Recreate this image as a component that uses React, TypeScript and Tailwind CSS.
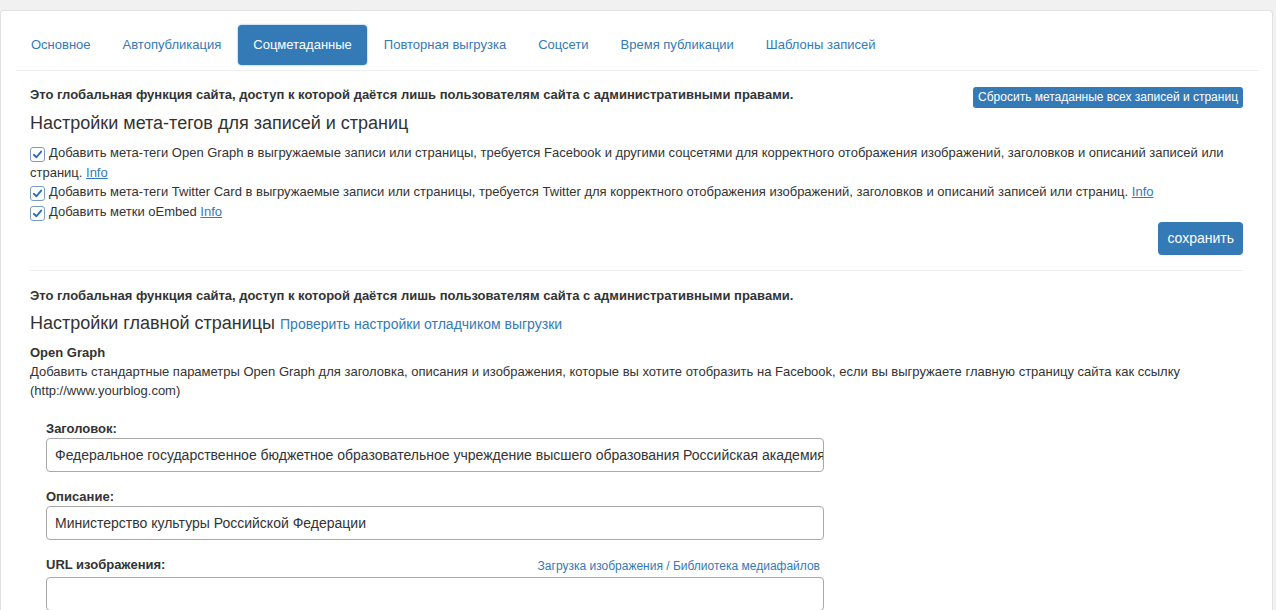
import React from 'react';

const tabs = [
  'Основное',
  'Автопубликация',
  'Соцметаданные',
  'Повторная выгрузка',
  'Соцсети',
  'Время публикации',
  'Шаблоны записей',
];

function CheckBox() {
  return (
    <span className="inline-flex h-[15px] w-[15px] shrink-0 items-center justify-center rounded-[3px] border border-[#7a9cc0] bg-white align-[-3px] mr-[4px]">
      <svg width="11" height="11" viewBox="0 0 12 12">
        <path d="M2 6.3 L4.8 9 L10 2.8" fill="none" stroke="#2a6cb3" strokeWidth="2" strokeLinecap="round" strokeLinejoin="round" />
      </svg>
    </span>
  );
}

function InfoLink() {
  return <a className="text-[#337ab7] underline cursor-pointer">Info</a>;
}

function Field({ label, value, extra }: { label: string; value?: string; extra?: string }) {
  return (
    <div className="w-[778px]">
      <div className={extra ? 'flex items-center justify-between h-[18px] mb-[3px]' : 'flex items-center justify-between h-[18px]'}>
        <label className="font-bold text-[13px] leading-[16px]">{label}</label>
        {extra && <a className="text-[12px] text-[#337ab7] pr-[4px] leading-[16px] mt-[1px]">{extra}</a>}
      </div>
      <div className="h-[34px] rounded-[4px] border border-[#a9a9a9] px-[8px] flex items-center overflow-hidden whitespace-nowrap text-[14px] text-[#333]">
        {value}
      </div>
    </div>
  );
}

export default function App() {
  return (
    <div className="min-h-[610px] bg-[#f1f1f1] pt-[10px] pr-[3px] font-['Liberation_Sans',Arial,sans-serif] text-[#333]">
      <div className="min-h-[600px] rounded-t-[4px] border-t border-l border-r border-[#e2e2e2] bg-white">
        <ul className="ml-[15px] mr-[13px] mt-[14px] flex gap-[2px] border-b border-[#eeeeee] pb-[5px]">
          {tabs.map((t, i) => (
            <li
              key={t}
              className={
                i === 2
                  ? 'rounded-[4px] bg-[#337ab7] px-[15px] py-[10px] text-[13px] leading-[20px] text-white shadow-[0_0_2px_#5b9bd5]'
                  : 'px-[15px] py-[10px] text-[13px] leading-[20px] text-[#337ab7]'
              }
            >
              {t}
            </li>
          ))}
        </ul>

        <div className="px-[29px] text-[13px]">
          <div className="flex items-start justify-between pt-[15px]">
            <div className="font-bold leading-[18px]">
              Это глобальная функция сайта, доступ к которой даётся лишь пользователям сайта с административными правами.
            </div>
            <button className="mt-[1px] rounded-[3px] bg-[#337ab7] px-[5px] py-[2px] text-[12px] leading-[17px] text-white">
              Сбросить метаданные всех записей и страниц
            </button>
          </div>
          <h3 className="mt-[4px] text-[18px] leading-[22px]">Настройки мета-тегов для записей и страниц</h3>
          <div className="mt-[9px] leading-[19.5px]">
            <div>
              <CheckBox />
              Добавить мета-теги Open Graph в выгружаемые записи или страницы, требуется Facebook и другими соцсетями для корректного отображения изображений, заголовков и описаний записей или страниц. <InfoLink />
            </div>
            <div>
              <CheckBox />
              Добавить мета-теги Twitter Card в выгружаемые записи или страницы, требуется Twitter для корректного отображения изображений, заголовков и описаний записей или страниц. <InfoLink />
            </div>
            <div>
              <CheckBox />
              Добавить метки oEmbed <InfoLink />
            </div>
          </div>
          <div className="flex justify-end mt-[1px]">
            <button className="h-[33px] rounded-[4px] bg-[#337ab7] px-[9px] text-[14px] text-white">сохранить</button>
          </div>
          <div className="mt-[15px] border-t border-[#eeeeee]" />

          <div className="pt-[16px] font-bold leading-[18px]">
            Это глобальная функция сайта, доступ к которой даётся лишь пользователям сайта с административными правами.
          </div>
          <h3 className="mt-[7px] text-[18px] leading-[22px]">
            Настройки главной страницы <a className="text-[14px] text-[#337ab7]">Проверить настройки отладчиком выгрузки</a>
          </h3>
          <div className="mt-[8px] font-bold leading-[19px]">Open Graph</div>
          <div className="leading-[19px]">
            Добавить стандартные параметры Open Graph для заголовка, описания и изображения, которые вы хотите отобразить на Facebook, если вы выгружаете главную страницу сайта как ссылку (http://www.yourblog.com)
          </div>

          <div className="mt-[20px] ml-[16px] flex flex-col gap-[16px]">
            <Field
              label="Заголовок:"
              value="Федеральное государственное бюджетное образовательное учреждение высшего образования Российская академия музыки имени Гнесиных"
            />
            <Field label="Описание:" value="Министерство культуры Российской Федерации" />
            <Field label="URL изображения:" extra="Загрузка изображения / Библиотека медиафайлов" />
          </div>
        </div>
      </div>
    </div>
  );
}
